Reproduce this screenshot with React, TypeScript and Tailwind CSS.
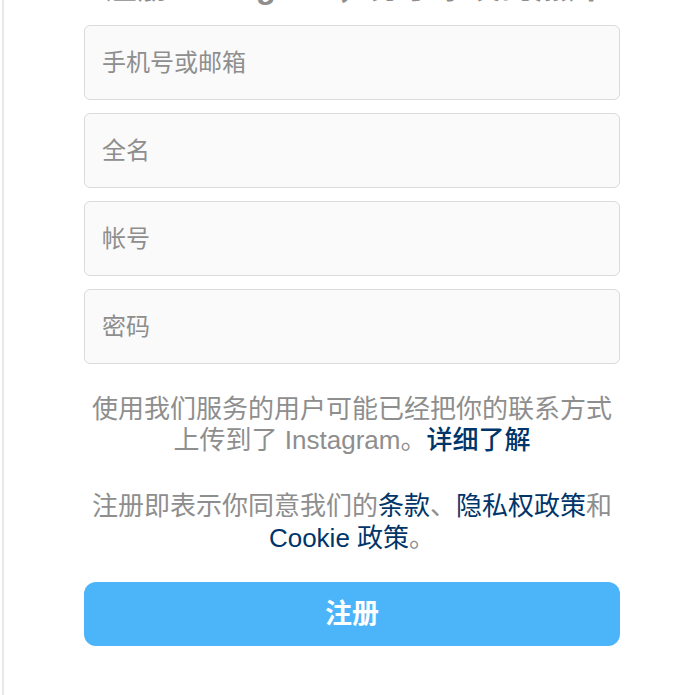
import React from "react";

const font = { fontFamily: '"Liberation Sans", "Noto Sans CJK SC", sans-serif' };

function Field({ placeholder }: { placeholder: string }) {
  return (
    <div className="h-[75px] w-[536px] rounded-[6px] border border-[#dbdbdb] bg-[#fafafa] flex items-center pl-[17px]">
      <span className="text-[24px] leading-[30px] text-[#8e8e8e]">{placeholder}</span>
    </div>
  );
}

export default function App() {
  return (
    <div className="w-[696px] h-[695px] overflow-hidden bg-white" style={font}>
      <div className="ml-[2px] h-[695px] border-l-2 border-[#e8e8e8] overflow-hidden">
        <div className="pl-[80px] w-[696px] flex flex-col">
          <div className="w-[536px] mt-[-33px] h-[40px] text-center text-[33px] leading-[40px] font-semibold text-[#8e8e8e] whitespace-nowrap">
            注册 Instagram，分享亲友的照片
          </div>
          <div className="mt-[18px] flex flex-col gap-[13px]">
            <Field placeholder="手机号或邮箱" />
            <Field placeholder="全名" />
            <Field placeholder="帐号" />
            <Field placeholder="密码" />
          </div>
          <p className="w-[536px] mt-[30px] text-center text-[26px] leading-[31px] text-[#8e8e8e]">
            使用我们服务的用户可能已经把你的联系方式
            <br />
            上传到了 Instagram。<span className="font-medium text-[#003569]">详细了解</span>
          </p>
          <p className="w-[536px] mt-[34px] text-center text-[26px] leading-[32px] text-[#8e8e8e]">
            注册即表示你同意我们的<span className="text-[#003569]">条款</span>、<span className="text-[#003569]">隐私权政策</span>和
            <br />
            <span className="text-[#003569]">Cookie 政策</span>。
          </p>
          <button className="mt-[28px] w-[536px] h-[64px] rounded-[12px] bg-[#4cb5f9] text-white text-[27px] font-bold flex items-center justify-center">
            注册
          </button>
        </div>
      </div>
    </div>
  );
}
